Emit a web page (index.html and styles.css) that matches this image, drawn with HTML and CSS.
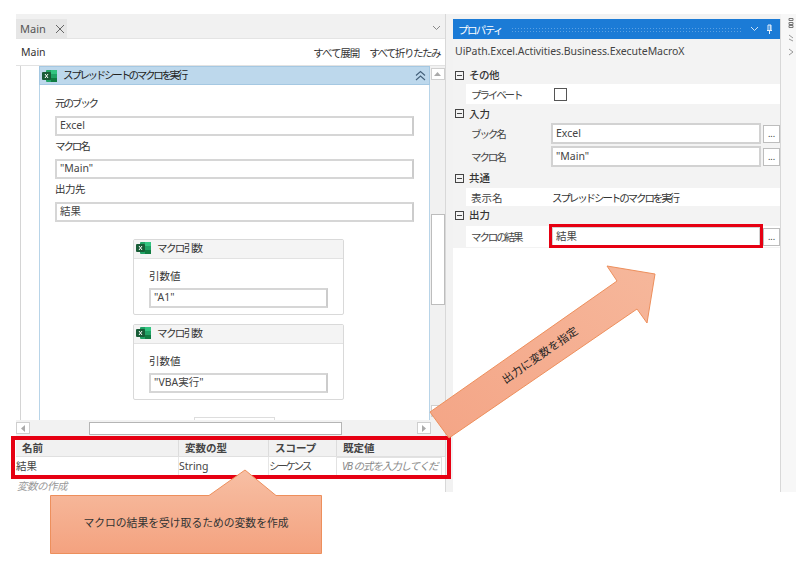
FILE: index.html
```html
<!DOCTYPE html>
<html lang="ja">
<head>
<meta charset="utf-8">
<title>プロパティ</title>
<link rel="stylesheet" href="styles.css">
</head>
<body>
<svg class="defs" width="0" height="0">
  <symbol id="xl" viewBox="0 0 15 14">
    <rect x="4" y="1" width="11" height="12" rx="1" fill="#21a366"/>
    <rect x="9" y="1" width="6" height="4" fill="#33c481"/>
    <rect x="9" y="9" width="6" height="4" fill="#107c41"/>
    <rect x="0" y="3" width="9" height="8" rx="1" fill="#185c37"/>
    <path d="M3 5l3 4M6 5l-3 4" stroke="#fff" stroke-width="1" fill="none"/>
  </symbol>
</svg>
<div class="app">
  <section class="designer">
    <div class="tabstrip">
      <div class="tab"><span>Main</span>
        <svg class="tab-x" width="10" height="10" viewBox="0 0 10 10"><path d="M1 1l8 8M9 1l-8 8" stroke="#666" fill="none"/></svg>
      </div>
      <svg class="tab-menu" width="9" height="6" viewBox="0 0 9 6"><path d="M1 1l3.500 3.500L8 1" stroke="#888" fill="none"/></svg>
    </div>
    <div class="crumb">
      <span>Main</span>
      <span class="crumb-actions"><span class="jp-a">すべて展開</span><span class="jp-b">すべて折りたたみ</span></span>
    </div>
    <div class="canvas">
      <div class="gutter"></div>
      <div class="card">
        <div class="card-head">
          <svg class="xl-icon" width="15" height="14"><use href="#xl"/></svg>
          <span class="jp title-text">スプレッドシートのマクロを実行</span>
          <svg class="collapse" width="11" height="11" viewBox="0 0 11 11"><path d="M1 5.500l4.500-4 4.500 4M1 10l4.500-4 4.500 4" stroke="#44607a" stroke-width="1.1" fill="none"/></svg>
        </div>
        <div class="card-body">
          <label class="jp">元のブック</label>
          <div class="field">Excel</div>
          <label class="jp">マクロ名</label>
          <div class="field">"Main"</div>
          <label class="jp-c">出力先</label>
          <div class="field">結果</div>
          <div class="args">
            <div class="arg">
              <div class="arg-head"><svg class="xl-icon" width="15" height="14"><use href="#xl"/></svg><span class="jp-d">マクロ引数</span></div>
              <div class="arg-body">
                <label>引数値</label>
                <div class="field">"A1"</div>
              </div>
            </div>
            <div class="arg">
              <div class="arg-head"><svg class="xl-icon" width="15" height="14"><use href="#xl"/></svg><span class="jp-d">マクロ引数</span></div>
              <div class="arg-body">
                <label>引数値</label>
                <div class="field">"VBA実行"</div>
              </div>
            </div>
            <div class="add-stub"></div>
          </div>
        </div>
      </div>
      <div class="vscroll">
        <div class="sb-btn"><svg width="7" height="4" viewBox="0 0 7 4"><path d="M0 4l3.500-4L7 4z" fill="#aaa"/></svg></div>
        <div class="vthumb"></div>
        <div class="sb-btn"></div>
      </div>
    </div>
    <div class="hscroll">
      <div class="sb-btn sb-left"><svg width="4" height="7" viewBox="0 0 4 7"><path d="M4 0L0 3.500 4 7z" fill="#aaa"/></svg></div>
      <div class="hthumb"></div>
      <div class="sb-btn sb-right"><svg width="4" height="7" viewBox="0 0 4 7"><path d="M0 0l4 3.500L0 7z" fill="#aaa"/></svg></div>
    </div>
    <div class="vars">
      <div class="var-row var-head">
        <div class="c1">名前</div><div class="c2">変数の型</div><div class="c3">スコープ</div><div class="c4">既定値</div>
      </div>
      <div class="var-row var-data">
        <div class="c1">結果</div><div class="c2">String</div><div class="c3 jp">シーケンス</div><div class="c4"><span class="hint">VB の式を入力してくだ</span></div>
      </div>
      <div class="var-add">変数の作成</div>
    </div>
  </section>

  <section class="props">
    <div class="props-title">
      <span class="jp">プロパティ</span>
      <span class="dots"></span>
      <svg width="9" height="6" viewBox="0 0 9 6"><path d="M1 1l3.500 3.500L8 1" stroke="#cfe4f7" fill="none"/></svg>
      <svg width="7" height="10" viewBox="0 0 7 10"><path d="M1 6.500h5M2 1h3v5.500H2zM3.500 6.500V10M4.200 1v5" stroke="#e6f1fb" fill="none"/></svg>
    </div>
    <div class="props-type">UiPath.Excel.Activities.Business.ExecuteMacroX</div>
    <div class="group"><i class="minus"></i><b class="jp-c">その他</b></div>
    <div class="prop prop-check"><span class="pname jp">プライベート</span><span class="checkbox"></span></div>
    <div class="group g-in"><i class="minus"></i><b>入力</b></div>
    <div class="prop prop-in"><span class="pname jp">ブック名</span><span class="pfield">Excel</span><span class="more">...</span></div>
    <div class="prop prop-in"><span class="pname jp">マクロ名</span><span class="pfield">"Main"</span><span class="more">...</span></div>
    <div class="group g-in g-common"><i class="minus"></i><b>共通</b></div>
    <div class="prop prop-text"><span class="pname">表示名</span><span class="pval jp">スプレッドシートのマクロを実行</span></div>
    <div class="group"><i class="minus"></i><b>出力</b></div>
    <div class="prop prop-in prop-out"><span class="pname jp">マクロの結果</span><span class="pfield">結果</span><span class="more">...</span></div>
    <div class="props-rest"></div>
  </section>

  <aside class="side">
    <svg width="6" height="10" viewBox="0 0 6 10"><path d="M1 .5h4v2H1zM1 4.500h4v2H1zM1 7.500h4v2H1z" stroke="#777" fill="none"/></svg>
    <svg width="6" height="8" viewBox="0 0 6 8"><path d="M1 1l4 3M1 5l4 2" stroke="#999" fill="none"/></svg>
    <svg width="6" height="8" viewBox="0 0 6 8"><path d="M1 1l4 3-4 3" stroke="#999" fill="none"/></svg>
  </aside>
</div>

<div class="red red-vars"></div>
<div class="red red-out"></div>

<svg class="overlay" width="808" height="561" viewBox="0 0 808 561">
  <defs>
    <linearGradient id="orange" x1="0" y1="0" x2="0" y2="1">
      <stop offset="0" stop-color="#f7bfa4"/>
      <stop offset="1" stop-color="#f4a27f"/>
    </linearGradient>
    <linearGradient id="orange2" x1="0" y1="1" x2="1" y2="0">
      <stop offset="0" stop-color="#f4a586"/>
      <stop offset="1" stop-color="#f6b79b"/>
    </linearGradient>
  </defs>
  <polygon points="430,412 617,281 607,266 655,274 647,323 637,309 449,438" fill="url(#orange2)" stroke="#ed8f5c"/>
  <text class="arrow-label" x="540" y="359" transform="rotate(-35 540 355)" text-anchor="middle">出力に変数を指定</text>
  <polygon points="50.500,495.500 209,495.500 245,470 276,495.500 321.500,495.500 321.500,553.500 50.500,553.500" fill="url(#orange)" stroke="#ed8f5c"/>
  <text class="callout-label" x="186" y="527" text-anchor="middle">マクロの結果を受け取るための変数を作成</text>
</svg>
</body>
</html>
```

FILE: styles.css
```css
* { box-sizing: border-box; }
html, body { margin: 0; padding: 0; background: #fff; }
body {
  width: 808px;
  height: 561px;
  overflow: hidden;
  position: relative;
  font-family: "Noto Sans", "Noto Sans CJK JP", sans-serif;
  font-size: 10.5px;
  color: #333;
}
.defs { position: absolute; }
.jp { letter-spacing: -2.1px; }
.jp-a { letter-spacing: -1.1px; }
.jp-b { letter-spacing: -1.5px; }
.jp-c { letter-spacing: -.5px; }
.jp-d { letter-spacing: -1.6px; }
.title-text { letter-spacing: -2.3px; margin-top: -2px; }

.app {
  display: flex;
  width: 780px;
  height: 478px;
  margin: 14px 0 0 16px;
  background: #f2f2f2;
}

/* designer */
.designer {
  width: 430px;
  flex: none;
  display: flex;
  flex-direction: column;
  border-right: 1px solid #d8d8d8;
  background: #fff;
}
.tabstrip {
  height: 25px;
  flex: none;
  padding-top: 5px;
  display: flex;
  justify-content: space-between;
  background: #f1f1f1;
  border-bottom: 1px solid #e4e4e4;
}
.tab {
  width: 51px;
  height: 19px;
  background: #e6e6e6;
  display: flex;
  align-items: center;
  gap: 9px;
  padding-left: 4px;
  color: #555;
  font-size: 11px;
}
.tab-x { flex: none; }
.tab-menu { margin: 6px 4px 0 0; }
.crumb {
  height: 27px;
  flex: none;
  display: flex;
  justify-content: space-between;
  align-items: center;
  padding: 0 5px 0 5px;
  font-size: 10.5px;
  border-bottom: 1px solid #e2e2e2;
}
.crumb-actions { display: flex; gap: 10px; }

.canvas {
  flex: 1;
  min-height: 0;
  display: flex;
  overflow: hidden;
}
.gutter {
  width: 19px;
  flex: none;
  margin-left: 4px;
  border-left: 1px solid #d4d4d4;
}
.card {
  width: 391px;
  flex: none;
  border: 1px solid #b8d4e8;
  border-top: 0;
  border-bottom: 0;
  background: #fff;
}
.card-head {
  height: 19px;
  display: flex;
  align-items: center;
  padding: 0 3px 0 2px;
  gap: 6px;
  background: #bdd8ec;
  border: 1px solid #a5c8e2;
  margin: 0 -1px;
  color: #222;
}
.collapse { margin-left: auto; }
.xl-icon { flex: none; }
.card-body { padding: 10px 15px 0; }
.card-body > label, .arg-body > label {
  display: block;
  height: 17px;
  line-height: 17px;
  margin-bottom: 4px;
}
.field {
  height: 20px;
  line-height: 15px;
  padding: 0 3px;
  border: 2px solid #d6d6d6;
  border-right-color: #ccc;
  background: #fff;
  color: #444;
  white-space: nowrap;
  margin-bottom: 2px;
}
.args {
  display: flex;
  flex-direction: column;
  align-items: flex-start;
  gap: 9px;
  padding: 15px 0 0 78px;
}
.arg {
  width: 211px;
  height: 76px;
  flex: none;
  border: 1px solid #d9d9d9;
  border-radius: 2px;
}
.arg-head {
  height: 19px;
  display: flex;
  align-items: center;
  gap: 6px;
  padding: 0 0 3px 2px;
  background: #f4f4f4;
  border-bottom: 1px solid #e2e2e2;
}
.arg-body { padding: 9px 15px 0; }
.arg-body > label { margin-bottom: 3px; }
.add-stub {
  width: 81px;
  height: 10px;
  flex: none;
  margin: 8px 0 0 61px;
  border: 1px solid #ddd;
}

.vscroll {
  width: 15px;
  flex: none;
  padding-top: 2px;
  background: #f1f1f1;
  display: flex;
  flex-direction: column;
  align-items: center;
}
.sb-btn {
  width: 14px;
  height: 12px;
  flex: none;
  border: 1px solid #cfcfcf;
  background: #fff;
  display: flex;
  align-items: center;
  justify-content: center;
}
.vthumb {
  width: 14px;
  height: 91px;
  flex: none;
  margin: 134px 0 100px;
  background: #fff;
  border: 1px solid #bdbdbd;
}

.hscroll {
  height: 16px;
  flex: none;
  display: flex;
  align-items: center;
  background: #f2f2f2;
  padding-right: 14px;
}
.sb-right { margin-left: auto; }
.hthumb {
  width: 253px;
  height: 13px;
  margin-left: 59px;
  background: #fff;
  border: 1px solid #b5b5b5;
}

.vars { flex: none; height: 56px; padding-top: 4px; display: flex; flex-direction: column; }
.var-row { display: flex; flex: none; }
.var-head {
  height: 17px;
  background: #f1f1f1;
  border-bottom: 1px solid #e0e0e0;
  font-weight: 700;
  line-height: 16px;
  color: #444;
}
.var-data { height: 18px; line-height: 19px; color: #444; }
.c1 { width: 162px; }
.c2 { width: 90px; }
.c3 { width: 68px; }
.c4 { flex: 1; min-width: 0; }
.var-head .c1 { padding-left: 6px; }
.var-head .c2, .var-head .c3, .var-head .c4 { padding-left: 6px; border-left: 1px solid #dcdcdc; }
.var-data .c2, .var-data .c3, .var-data .c4 { border-left: 1px solid #e6e6e6; }
.var-data .c3 { letter-spacing: -2.2px; }
.var-data .c4 {
  margin-right: 3px;
  padding-left: 5px;
  border: 1px solid #e2e2e2;
  border-bottom: 0;
  overflow: hidden;
  white-space: nowrap;
  line-height: 17px;
}
.hint { color: #888; font-style: italic; letter-spacing: -1.1px; }
.var-add { padding: 3px 0 0 1px; color: #999; font-style: italic; letter-spacing: -.5px; }

/* properties */
.props {
  width: 328px;
  flex: none;
  margin: 5px 0 0 7px;
  display: flex;
  flex-direction: column;
  background: #f3f3f3;
  border-right: 1px solid #d8d8d8;
}
.props-title {
  height: 20px;
  flex: none;
  background: #1b7bd6;
  color: #fff;
  display: flex;
  align-items: center;
  gap: 7px;
  padding: 0 7px 0 5px;
}
.props-title .jp { letter-spacing: -1.6px; }
.dots {
  flex: 1;
  height: 5px;
  margin-left: 2px;
  background-image: radial-gradient(#5aa0e2 .7px, transparent .9px);
  background-size: 3px 3px;
}
.props-type { height: 27px; flex: none; padding: 4px 0 0 2px; line-height: 17px; color: #444; letter-spacing: -.05px; }
.group {
  height: 18px;
  flex: none;
  display: flex;
  align-items: center;
  gap: 5px;
  padding-left: 2px;
  line-height: 18px;
}
.group b { font-weight: 500; color: #333; }
.g-in { height: 19px; }
.g-common { padding-bottom: 1px; }
.minus {
  width: 9px;
  height: 9px;
  border: 1px solid #444;
  position: relative;
  flex: none;
}
.minus::after {
  content: "";
  position: absolute;
  left: 1px;
  top: 3px;
  width: 5px;
  height: 1px;
  background: #444;
}
.prop {
  display: flex;
  align-items: center;
  flex: none;
  margin-left: 13px;
  background: #fff;
}
.prop-check { height: 20px; }
.prop-in { height: 21px; margin-bottom: 2px; background: #f3f3f3; }
.prop-out { margin-top: 2px; background: #fff; }
.prop-text { height: 18px; }
.pname { width: 85px; flex: none; padding-left: 5px; color: #444; white-space: nowrap; }
.checkbox { width: 13px; height: 13px; margin-left: 3px; border: 1px solid #555; background: #fff; }
.pval { margin-left: 1px; color: #333; }
.pfield {
  width: 210px;
  height: 21px;
  line-height: 17px;
  padding-left: 3px;
  border: 2px solid #d2d2d2;
  background: #fff;
  color: #444;
}
.more {
  width: 17px;
  height: 18px;
  margin-left: 2px;
  border: 1px solid #bdbdbd;
  background: #fff;
  text-align: center;
  line-height: 16px;
  font-size: 9px;
}
.props-rest { flex: 1; background: #fff; margin-top: -1px; }

.side {
  flex: 1;
  padding: 4px 0 0 7px;
  display: flex;
  flex-direction: column;
  gap: 6px;
  background: #f7f7f7;
}

/* overlays */
.red { position: absolute; border: 4px solid #e60012; }
.red-vars { left: 11px; top: 436px; width: 440px; height: 43px; }
.red-out { left: 549px; top: 224px; width: 214px; height: 24px; border-width: 3.5px; }
.overlay { position: absolute; left: 0; top: 0; pointer-events: none; }
.arrow-label { font-size: 11px; fill: #222; letter-spacing: .2px; }
.callout-label { font-size: 10.8px; fill: #333; }
```
